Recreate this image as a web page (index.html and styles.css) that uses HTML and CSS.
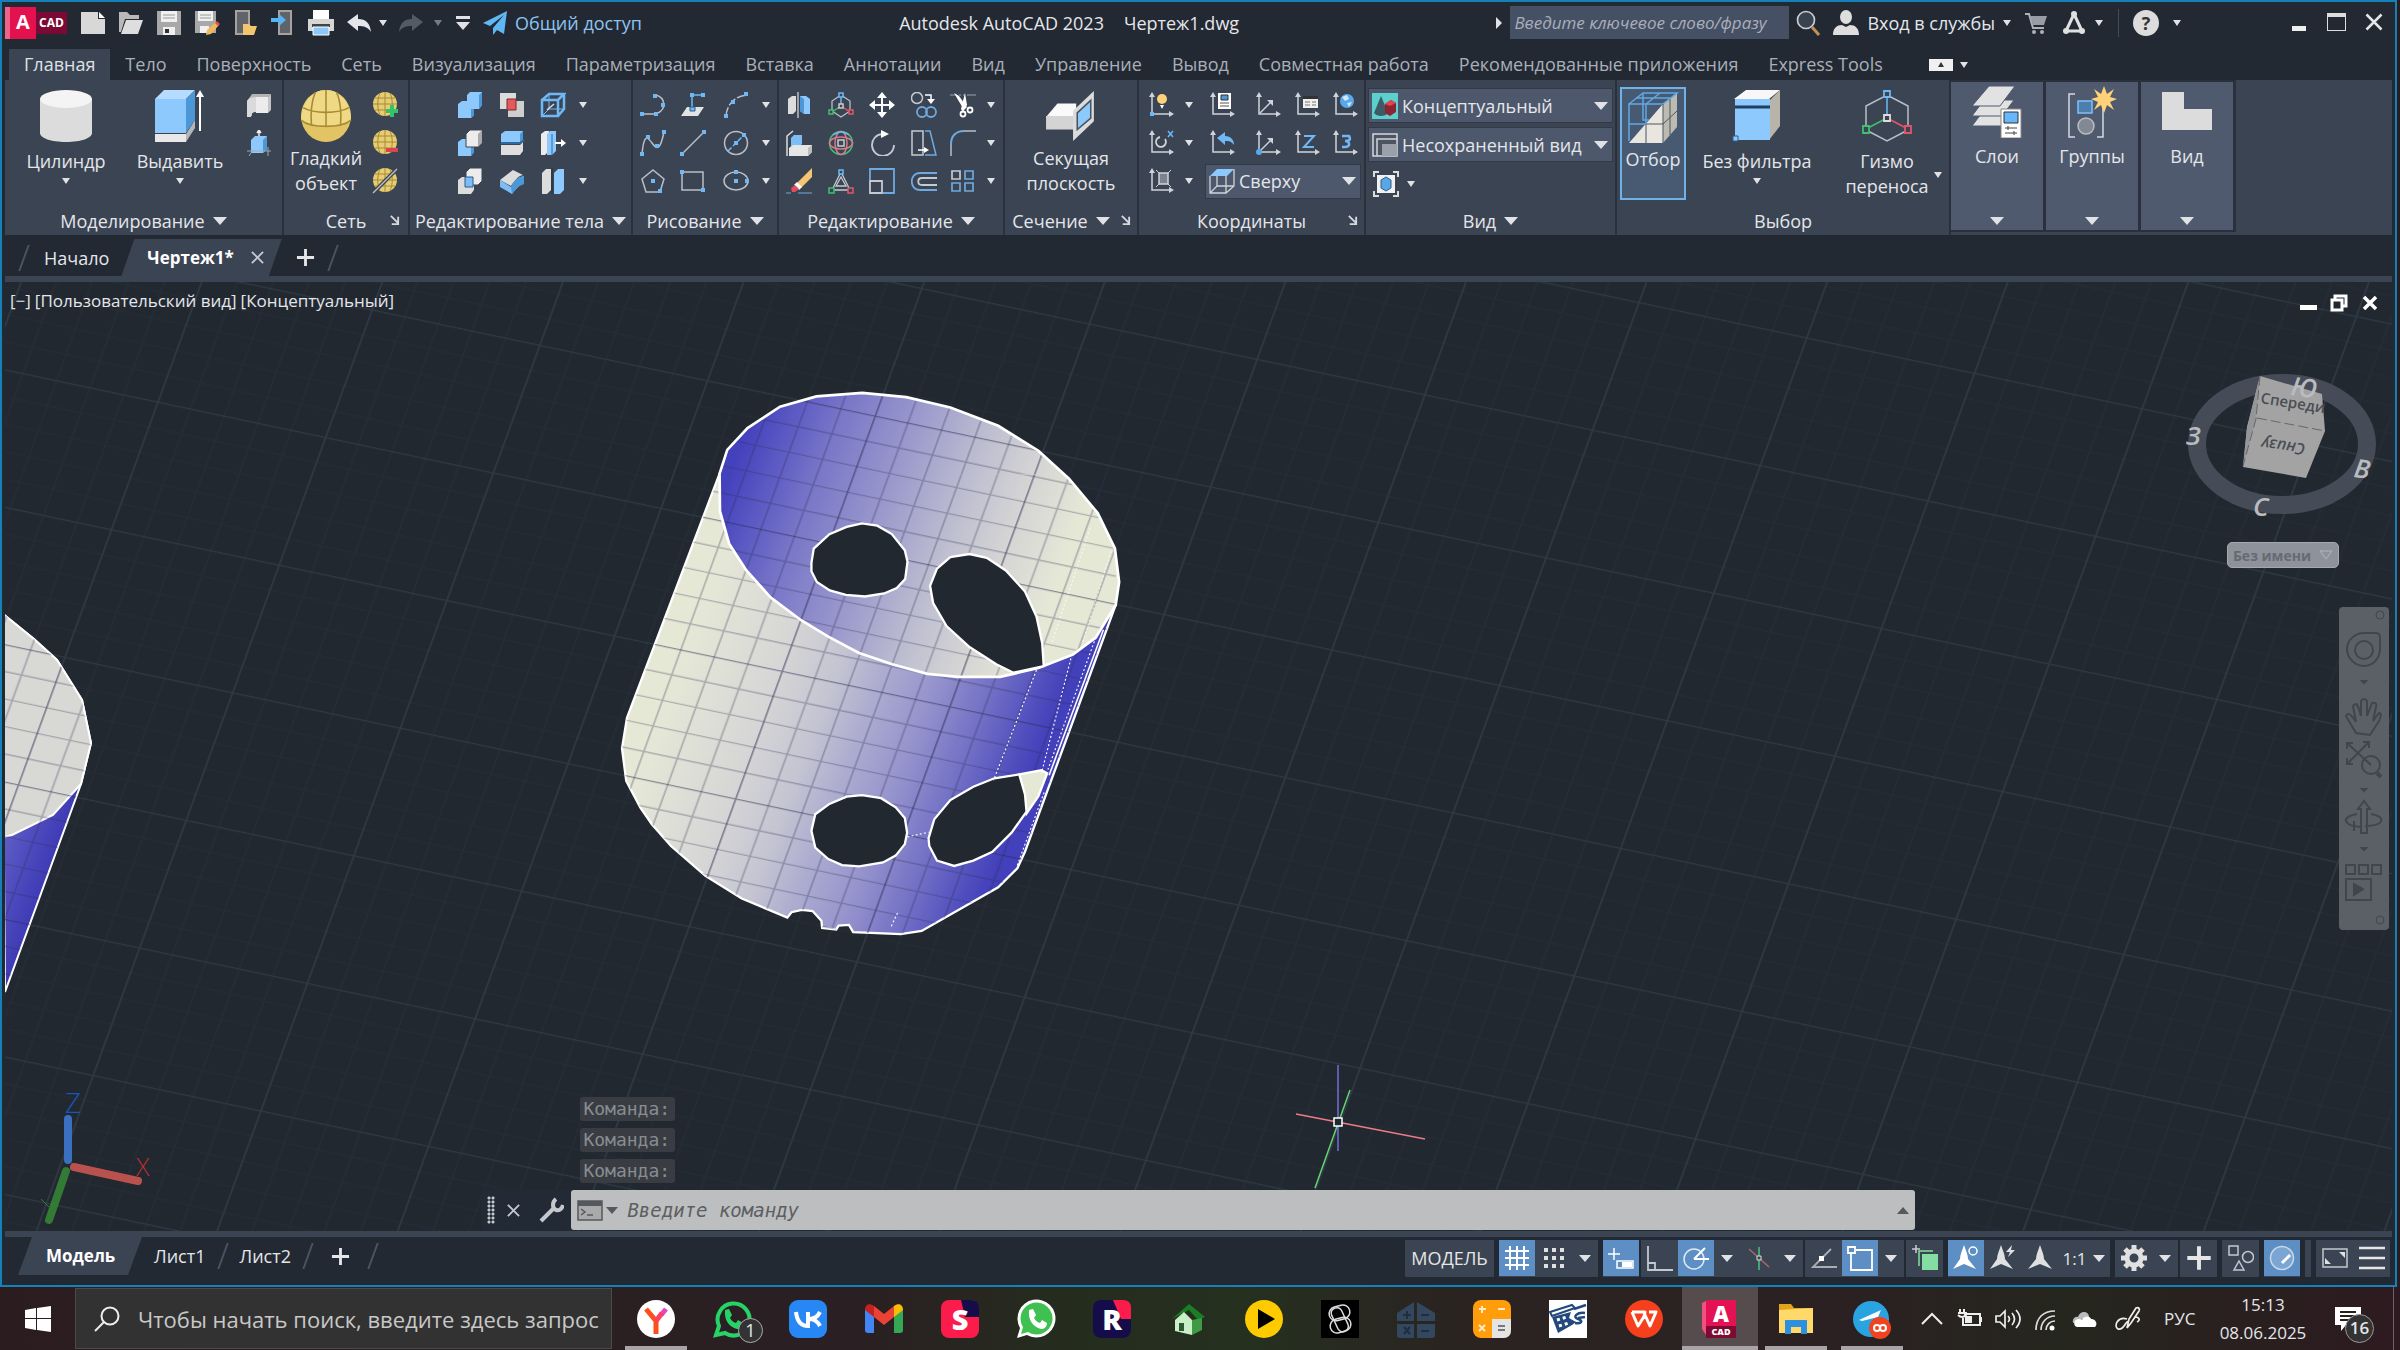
FILE: index.html
```html
<!DOCTYPE html>
<html lang="ru">
<head>
  <meta charset="UTF-8">
  <title>Autodesk AutoCAD 2023 - Чертеж1.dwg</title>
  <link rel="stylesheet" href="styles.css">
</head>
<body>

  <!-- icons -->
  <svg class="sprite" aria-hidden="true">
    <symbol id="new" viewBox="0 0 26 26"><path fill="#d8d8d8" d="M1 2h17v7h7v15H1z"/><path fill="#fff" d="M19 2l6 6h-6z"/></symbol>
    <symbol id="open" viewBox="0 0 26 26"><path fill="#b9b9b9" d="M1 2h8l3 3h9v4H7L3 22H1z"/><path fill="#dedede" d="M8 10h17l-5 14H3z"/></symbol>
    <symbol id="save" viewBox="0 0 26 26"><path fill="#a8a8a8" d="M1 1h24v24H1z"/><path fill="#f0f0f0" d="M5 1h16v11H5zM7 17h12v8H7z"/><path stroke="#999" d="M7 5h12M7 8h12"/><path fill="#333" d="M9 19h4v4H9z"/></symbol>
    <symbol id="saveas" viewBox="0 0 26 26"><path fill="#a8a8a8" d="M1 1h21v22H1z"/><path fill="#f0f0f0" d="M4 1h15v10H4zM6 16h9v7H6z"/><path stroke="#999" d="M6 5h11M6 8h11"/><path fill="#f0b95b" d="M13 20l9-8 3 3-8 9-5 1z"/><path fill="#e04f4f" d="M21 13l2-2 3 3-2 2z"/></symbol>
    <symbol id="phone-open" viewBox="0 0 26 26"><path fill="#5f646c" stroke="#a9a29a" stroke-width="2" d="M4 1h13v23H4z"/><path fill="#f2c66c" d="M11 14h6l2 2h6l-3 9H11z"/></symbol>
    <symbol id="phone-save" viewBox="0 0 26 26"><path fill="#5f646c" stroke="#a9a29a" stroke-width="2" d="M9 1h12v23H9z"/><path fill="#56b4f5" d="M1 8h8V4l7 6-7 6v-4H1z"/></symbol>
    <symbol id="print" viewBox="0 0 26 26"><path fill="#fff" d="M5 0h16v9H5z"/><path fill="#d6d6d6" d="M0 9h26v12H0z"/><path fill="#444" d="M4 14h18v3H4z"/><path fill="#8dc8fb" stroke="#fff" d="M5 17h16v8H5z"/></symbol>
    <symbol id="undo" viewBox="0 0 26 26"><path d="M1 12l11-8v5c8 0 12 4 13 13-3-5-7-6-13-6v5z" fill="currentColor"/></symbol>
    <symbol id="redo" viewBox="0 0 26 26"><path d="M25 12L14 4v5C6 9 2 13 1 22c3-5 7-6 13-6v5z" fill="currentColor"/></symbol>
    <symbol id="plane" viewBox="0 0 26 26"><path fill="#5fb7f3" d="M1 13L25 1l-3 23-7-4-4 5v-7L22 5 8 16z"/></symbol>
    <symbol id="cyl" viewBox="0 0 52 52"><path fill="#dcdcdc" d="M0 9v34c0 5 11 9 26 9s26-4 26-9V9z"/><ellipse cx="26" cy="9" rx="26" ry="9" fill="#f4f4f4"/></symbol>
    <symbol id="extrude" viewBox="0 0 52 52"><path fill="#e8e8e8" d="M1 44h31v8H1z"/><path fill="#b5b5b5" d="M32 44l9-14v8l-9 14z"/><path fill="#8dc9fd" d="M1 9h31v34H1z"/><path fill="#b5dcff" d="M1 9l9-9h31l-9 9z"/><path fill="#4c97d6" d="M32 9l9-9v30l-9 13z"/><path stroke="#fff" stroke-width="2" d="M46 41V4"/><path fill="#fff" d="M42 7l4-7 4 7z"/></symbol>
    <symbol id="egg" viewBox="0 0 50 50"><ellipse cx="25" cy="25" rx="24" ry="25" fill="#e3c464"/><path fill="#f0d984" d="M1 29c0-16 10-29 24-29s24 13 24 29c-8 9-40 9-48 0z"/><path fill="none" stroke="#a88a35" stroke-width="1.5" d="M1 29c9 8 39 8 48 0M3 17c10 6 34 6 44 0M25 0v35M15 2c-4 8-5 22-4 31M35 2c4 8 5 22 4 31"/></symbol>
    <symbol id="mesh" viewBox="0 0 26 26"><ellipse cx="13" cy="12" rx="12" ry="12" fill="#e6cc72"/><path fill="none" stroke="#a88a35" d="M1 12h24M3 6h20M3 18h20M13 0v24M8 1c-3 7-3 15 0 22M18 1c3 7 3 15 0 22"/></symbol>
    <symbol id="mesh-more" viewBox="0 0 26 26"><use href="#mesh"/><path stroke="#33c46a" stroke-width="4" d="M20 13v12M14 19h12"/></symbol>
    <symbol id="mesh-less" viewBox="0 0 26 26"><use href="#mesh"/><path stroke="#dc4350" stroke-width="4" d="M14 20h12"/></symbol>
    <symbol id="mesh-cut" viewBox="0 0 26 26"><use href="#mesh"/><path stroke="#3b4453" stroke-width="4" d="M1 25L25 1"/><path stroke="#bbb" stroke-width="1.5" d="M1 25L25 1"/></symbol>
    <symbol id="polysolid" viewBox="0 0 26 26"><path fill="#b4b4b4" d="M1 9l5-7h19l-3 3H9l-3 6v13H1z"/><path fill="#ececec" d="M10 5h12v16H10z"/><path fill="#c4c4c4" d="M22 5l3-3v16l-3 3z"/><path fill="#dadada" d="M1 9q2-4 9-4v15q-5 0-5 5H1z"/></symbol>
    <symbol id="presspull" viewBox="0 0 26 26"><path fill="#8dc9fd" d="M5 10l4-4h12v13l-4 4H5z"/><path fill="#4c97d6" d="M17 10l4-4v13l-4 4z"/><path stroke="#eee" stroke-width="1.5" fill="none" d="M13 6V0M11 3l2-3 2 3"/><path stroke="#9ab" fill="none" d="M1 21h24M3 26l4-6M22 26v-9"/></symbol>
    <symbol id="union" viewBox="0 0 26 26"><path fill="#8dc9fd" d="M1 12l4-3h5V3l3-3h12v13l-3 4h-5v6l-3 3H1z"/><path fill="#4c97d6" d="M22 3l3-3v13l-3 4h-5v6l-3 3v-9h8z"/></symbol>
    <symbol id="subtract" viewBox="0 0 26 26"><path fill="#dcdcdc" d="M1 1h16v16H1z"/><path fill="#cfcfcf" d="M9 9h16v16H9z"/><path fill="#e25a5a" stroke="#7c2a2a" d="M8 7h9v11H8z"/></symbol>
    <symbol id="wirebox" viewBox="0 0 26 26"><path fill="none" stroke="#6fb8f5" stroke-width="2.5" d="M2 8h16v16H2zM2 8l7-6h15l-6 6M24 2v15l-6 7"/><path fill="none" stroke="#6fb8f5" d="M9 2v15l-7 7M9 17h15"/><path stroke="#ddd" stroke-width="1.5" d="M7 18l7-6"/></symbol>
    <symbol id="copyface" viewBox="0 0 26 26"><path fill="#8dc9fd" d="M1 12l4-3h12v13l-3 4H1z"/><path fill="#4c97d6" d="M14 13l3-3v12l-3 4z"/><path fill="#ececec" stroke="#3b4453" d="M9 4l4-4h12v13l-4 4H9z"/><path fill="#a9a9a9" d="M21 4l4-4v13l-4 4z"/></symbol>
    <symbol id="slice" viewBox="0 0 26 26"><path fill="#8dc9fd" d="M2 4l4-3h18v9l-3 3H2z"/><path fill="#4c97d6" d="M21 4l3-3v9l-3 3z"/><path fill="#dedede" d="M2 15h19l3-3v9l-3 4H2z"/><path fill="none" stroke="#2e6aa0" stroke-width="2" d="M2 13h19l4-3"/></symbol>
    <symbol id="offsetface" viewBox="0 0 26 26"><path fill="#ececec" d="M1 4l4-3h4v20l-4 4H1z"/><path fill="#8dc9fd" d="M7 4l3-3h6v20l-4 4H7z"/><path stroke="#2e6aa0" d="M12 4v21"/><path stroke="#fff" stroke-width="2" d="M15 13h8"/><path fill="#fff" d="M21 9l5 4-5 4z"/></symbol>
    <symbol id="intersect" viewBox="0 0 26 26"><path fill="#dcdcdc" d="M1 12l4-3h12v13l-3 4H1z"/><path fill="#ececec" stroke="#3b4453" d="M9 4l4-4h12v13l-4 4H9z"/><path fill="#7cbdf5" stroke="#2d5c86" d="M8 9h8v10H8z"/></symbol>
    <symbol id="bend" viewBox="0 0 26 26"><path fill="#dcdcdc" d="M1 12L14 2l10 5c-5 1-8 5-12 11z"/><path fill="#7cbdf5" d="M1 12l11 7c4-7 7-10 13-11v8c-5 1-8 5-12 10L1 19z"/><path fill="#4c97d6" d="M12 19c4-7 7-10 13-11v8c-5 1-8 5-12 10z"/></symbol>
    <symbol id="separate" viewBox="0 0 26 26"><path fill="#dcdcdc" d="M2 5l4-4h5v21l-4 4H2z"/><path fill="#8dc9fd" d="M14 5l4-4h6v21l-4 4h-6z"/><path stroke="#2e3642" stroke-width="1.5" d="M12 0v26"/></symbol>
    <symbol id="pline" viewBox="0 0 26 26"><path fill="none" stroke="#b9bfc8" stroke-width="1.5" d="M3 22h13M16 3c10 3 10 14 2 18"/><path fill="#6fb8f5" d="M0 20h4v4H0zM14 20h4v4h-4zM13 2h4v4h-4zM21 11h4v4h-4z"/></symbol>
    <symbol id="ucsrect" viewBox="0 0 26 26"><path fill="#e3e3e3" d="M7 15h17l-6 9H1z"/><path stroke="#6fb8f5" stroke-width="1.5" fill="none" d="M12 18V3h11"/><path fill="#6fb8f5" stroke="#2c5f8e" d="M10 15h5v4h-5z"/><path fill="#6fb8f5" d="M10 1h4v4h-4zM21 1h4v4h-4z"/></symbol>
    <symbol id="arc" viewBox="0 0 26 26"><path fill="none" stroke="#b9bfc8" stroke-width="1.5" stroke-dasharray="9 2" d="M3 24C4 12 12 4 24 3"/><path fill="#6fb8f5" d="M1 22h4v4H1zM8 8h4v4H8zM21 0h4v4h-4z"/></symbol>
    <symbol id="spline" viewBox="0 0 26 26"><path fill="none" stroke="#b9bfc8" stroke-width="1.5" d="M2 24C4 4 7 6 12 13s8 8 12-11"/><path fill="#6fb8f5" d="M0 22h4v4H0zM6 5h4v4H6zM15 14h4v4h-4zM22 0h4v4h-4z"/></symbol>
    <symbol id="line" viewBox="0 0 26 26"><path stroke="#b9bfc8" stroke-width="1.5" d="M2 24L24 2"/><path fill="#6fb8f5" d="M0 22h4v4H0zM22 0h4v4h-4z"/></symbol>
    <symbol id="circle" viewBox="0 0 26 26"><circle cx="13" cy="13" r="11.5" fill="none" stroke="#b9bfc8" stroke-width="1.5"/><path stroke="#6fb8f5" stroke-width="1.5" stroke-dasharray="5 2" d="M5 21L21 5"/><path fill="#6fb8f5" d="M11 11h4v4h-4zM19 3h4v4h-4z"/></symbol>
    <symbol id="polygon" viewBox="0 0 26 26"><path fill="none" stroke="#b9bfc8" stroke-width="1.5" d="M13 2l11 9-4 13H6L2 11z"/><path fill="#6fb8f5" d="M11 11h4v4h-4zM18 21h4v4h-4z"/></symbol>
    <symbol id="rect" viewBox="0 0 26 26"><path fill="none" stroke="#b9bfc8" stroke-width="1.5" d="M2 4h21v18H2z"/><path fill="#6fb8f5" d="M0 2h4v4H0zM21 20h4v4h-4z"/></symbol>
    <symbol id="ellipse" viewBox="0 0 26 26"><ellipse cx="13" cy="13" rx="12" ry="9" fill="none" stroke="#b9bfc8" stroke-width="1.5"/><path fill="#6fb8f5" d="M11 2h4v4h-4zM11 11h4v4h-4zM22 11h4v4h-4z"/></symbol>
    <symbol id="mirror3" viewBox="0 0 26 26"><path fill="#dcdcdc" d="M2 7l4-3h4v15l-3 3H2z"/><path fill="#8dc9fd" d="M14 4h6l4 3v15h-6l-4-3z"/><path fill="#4c97d6" d="M14 4l4 3v15l-4-3z"/><path stroke="#fff" d="M12 0v26"/></symbol>
    <symbol id="gizmo" viewBox="0 0 26 26"><path fill="none" stroke="#b9bfc8" stroke-width="1.3" d="M13 3l9 6v10l-9 6-9-6V9z"/><path stroke="#6fb8f5" stroke-width="1.5" d="M13 3v11"/><path stroke="#3fbf72" stroke-width="1.5" d="M13 14l-9 6"/><path stroke="#e4556b" stroke-width="1.5" d="M13 14l9 6"/><g fill="#3b4453" stroke-width="1.5"><path stroke="#6fb8f5" d="M11 1h4v4h-4z"/><path stroke="#ccc" d="M11 12h4v4h-4z"/><path stroke="#3fbf72" d="M1 18h4v4H1z"/><path stroke="#e4556b" d="M21 18h4v4h-4z"/></g></symbol>
    <symbol id="move" viewBox="0 0 26 26"><path stroke="#fff" stroke-width="2" d="M13 3v20M3 13h20"/><path fill="#fff" d="M13 0l5 6H8zM13 26l5-6H8zM0 13l6-5v10zM26 13l-6-5v10z"/></symbol>
    <symbol id="copy" viewBox="0 0 26 26"><circle cx="6" cy="6" r="5.5" fill="none" stroke="#c5cad2" stroke-width="1.5"/><g fill="none" stroke="#6fa9df" stroke-width="1.8"><circle cx="11" cy="20" r="5"/><circle cx="20" cy="20" r="5"/></g><path fill="none" stroke="#fff" stroke-width="1.5" d="M14 3h6v5"/><path fill="#fff" d="M16 7h8l-4 5z"/></symbol>
    <symbol id="trim" viewBox="0 0 26 26"><path stroke="#9aa2ae" d="M0 3h5M17 3h9"/><path stroke="#6fa9df" stroke-dasharray="2 2" d="M5 3h12"/><path fill="#fff" d="M4 1l5 3 8 11-3 3zM15 1l2 12-4 7-2-3z"/><g fill="none" stroke="#fff" stroke-width="1.8"><circle cx="13" cy="22" r="2.5"/><circle cx="20" cy="18" r="2.5"/></g></symbol>
    <symbol id="align3" viewBox="0 0 26 26"><path fill="#7cbdf5" d="M5 8l3-3h8v9l-3 3H5z"/><path fill="#e6e6e6" d="M3 18l4-3h19v7l-4 4H3z"/><path fill="#bdbdbd" d="M22 18l4-3v7l-4 4z"/><path fill="none" stroke="#ddd" stroke-width="1.5" d="M1 26V6l6-5"/></symbol>
    <symbol id="rotgizmo" viewBox="0 0 26 26"><g fill="none" stroke-width="1.5"><circle cx="13" cy="13" r="11.5" stroke="#3fbf72"/><ellipse cx="13" cy="13" rx="6" ry="11.5" stroke="#d47c8c"/><ellipse cx="13" cy="13" rx="11.5" ry="6" stroke="#d47c8c"/><path stroke="#6fb8f5" d="M5 5q8-6 16 0"/><path stroke="#ccc" d="M10 10h6v6h-6z"/></g></symbol>
    <symbol id="rotate" viewBox="0 0 26 26"><path fill="none" stroke="#c5cad2" stroke-width="1.8" d="M13 4A11 11 0 1 0 25 15"/><path fill="#fff" d="M12 0l8 4-8 4z"/></symbol>
    <symbol id="stretch" viewBox="0 0 26 26"><path fill="none" stroke="#c5cad2" stroke-width="1.5" d="M1 1h11v24H1z"/><path fill="none" stroke="#6fa9df" stroke-width="1.5" d="M14 1h5l6 24H14"/><path stroke="#fff" stroke-width="1.5" d="M7 20h8"/><path fill="#fff" d="M13 17l5 3-5 3z"/></symbol>
    <symbol id="fillet" viewBox="0 0 26 26"><path fill="none" stroke="#b9bfc8" stroke-width="1.5" d="M1 26V14M14 1h12"/><path fill="none" stroke="#6fa9df" stroke-width="2" d="M1 14C1 6 6 1 14 1"/></symbol>
    <symbol id="erase" viewBox="0 0 26 26"><path fill="#f6c572" d="M11 15L26 0v9L15 20z"/><path fill="#fff" d="M8 17l3-3 5 5-3 3z"/><path fill="#e04f5b" d="M5 20l4-3 4 4-4 3H6z"/><path stroke="#6fa9df" d="M0 25h5M12 25h14"/></symbol>
    <symbol id="scalegizmo" viewBox="0 0 26 26"><path fill="none" stroke="#c5cad2" stroke-width="1.3" d="M13 4l9 18H4zM13 9l5 9H8z"/><g fill="#3b4453" stroke-width="1.5"><path stroke="#6fb8f5" d="M11 2h4v4h-4z"/><path stroke="#3fbf72" d="M1 20h5v5H1z"/><path stroke="#e4556b" d="M20 20h5v5h-5z"/></g></symbol>
    <symbol id="scale" viewBox="0 0 26 26"><path fill="none" stroke="#6fa9df" stroke-width="1.8" d="M1 12V1h24v24H14"/><path fill="none" stroke="#c5cad2" stroke-width="1.8" d="M1 13h12v12H1z"/></symbol>
    <symbol id="offset" viewBox="0 0 26 26"><path fill="none" stroke="#6fa9df" stroke-width="1.8" d="M26 5H9C-2 5-2 22 9 22h17"/><path fill="none" stroke="#c5cad2" stroke-width="1.8" d="M26 10H11c-5 0-5 7 0 7h15"/></symbol>
    <symbol id="array" viewBox="0 0 26 26"><g fill="none" stroke-width="1.7"><path stroke="#c5cad2" d="M2 3h8v8H2z"/><path stroke="#6fa9df" d="M15 3h8v8h-8zM2 15h8v8H2zM15 15h8v8h-8z"/></g></symbol>
    <symbol id="section" viewBox="0 0 50 50"><path fill="#fafafa" d="M1 26l11-13h18v13z"/><path fill="#d4d4d4" d="M1 25h27v13H1z"/><path fill="#dcdcdc" d="M27 20L47 1v29L27 49z"/><path fill="#8dc9fd" stroke="#4b555f" stroke-width="1.5" d="M31 22l13-12v17L31 38z"/></symbol>
    <symbol id="ucs" viewBox="0 0 26 26"><path fill="none" stroke="#d0d4da" stroke-width="1.5" d="M4 3v19h19"/><path fill="#d0d4da" d="M1 5l3-5 3 5zM21 19l5 3-5 3z"/></symbol>
    <symbol id="ucs-bulb" viewBox="0 0 26 26"><use href="#ucs"/><circle cx="14" cy="7" r="5" fill="#ffd27a"/><path fill="#fff" d="M12 13h4l-2 4z"/><path fill="#6fb8f5" d="M2 20h4v4H2z"/></symbol>
    <symbol id="ucs-dlg" viewBox="0 0 26 26"><use href="#ucs"/><path fill="#fff" d="M9 1h13v16H9z"/><path fill="#4c97d6" stroke="#333" d="M12 3h7v5h-7z"/><path stroke="#555" d="M11 11h9M11 14h9"/></symbol>
    <symbol id="ucs-3p" viewBox="0 0 26 26"><use href="#ucs"/><path stroke="#d0d4da" stroke-width="1.5" d="M5 21L16 10"/><path fill="#d0d4da" d="M12 8h6v6z"/></symbol>
    <symbol id="ucs-list" viewBox="0 0 26 26"><use href="#ucs"/><path fill="#f0f0f0" d="M9 4h15v12H9z"/><path fill="#333" d="M9 4h15v3H9z"/><path stroke="#777" d="M11 10h5M11 13h5M18 10h4M18 13h4"/></symbol>
    <symbol id="ucs-world" viewBox="0 0 26 26"><use href="#ucs"/><circle cx="15" cy="9" r="7" fill="#58a8ea"/><path fill="#cfe8ff" d="M10 5l5-2 2 4-4 2zM15 11l5-1-3 5z"/></symbol>
    <symbol id="ucs-x" viewBox="0 0 26 26"><use href="#ucs"/><path fill="none" stroke="#d0d4da" stroke-width="1.8" d="M17 9a5 5 0 1 1-5-2"/><path stroke="#6fb8f5" stroke-width="1.5" d="M20 1l5 6M25 1l-5 6"/></symbol>
    <symbol id="ucs-prev" viewBox="0 0 26 26"><use href="#ucs"/><path fill="#6fb8f5" d="M8 8l8-6v4c6 0 9 4 9 9-3-4-5-4-9-4v4z"/></symbol>
    <symbol id="ucs-org" viewBox="0 0 26 26"><use href="#ucs-3p"/><circle cx="4" cy="22" r="3" fill="#58a8ea"/></symbol>
    <symbol id="ucs-z" viewBox="0 0 26 26"><use href="#ucs"/><path fill="none" stroke="#6fb8f5" stroke-width="2" d="M10 6h10L10 17h10"/></symbol>
    <symbol id="ucs-three" viewBox="0 0 26 26"><use href="#ucs"/><path fill="none" stroke="#6fb8f5" stroke-width="2.5" d="M10 6h7c3 5-2 5-4 5 5 0 6 6 0 6h-3"/></symbol>
    <symbol id="ucs-obj" viewBox="0 0 26 26"><use href="#ucs"/><path fill="#7d848f" stroke="#d0d4da" stroke-width="1.5" d="M11 5h9v11h-9z"/><path stroke="#d0d4da" d="M8 2l3 3M23 2l-3 3M8 19l3-3M23 19l-3-3"/></symbol>
    <symbol id="topcube" viewBox="0 0 26 26"><path fill="#8dc9fd" d="M1 8l7-7h17l-7 7z"/><path fill="none" stroke="#cfd3d8" stroke-width="1.3" d="M1 8v17h16l8-7V1M17 8v17M8 8v10h17M8 18l-7 7"/></symbol>
    <symbol id="concept" viewBox="0 0 26 26"><path fill="#5cd0cc" d="M0 0h26v26H0z"/><path fill="#3d5a66" d="M9 3l7 17c-3 4-11 4-14 0z"/><path fill="#8c2433" d="M13 11l6-4 5 3v9l-6 4-5-3z"/><path fill="#e0444f" d="M13 11l6-4 5 3-6 3z"/></symbol>
    <symbol id="view" viewBox="0 0 26 26"><path fill="#4b5563" stroke="#d8d8d8" stroke-width="1.5" d="M1 2h24v22H1z"/><path fill="none" stroke="#d8d8d8" stroke-width="1.5" d="M5 24V7h20"/><path fill="#9aa1ab" d="M10 12h15v12H10z"/></symbol>
    <symbol id="vport" viewBox="0 0 26 26"><path fill="#f0f0f0" d="M4 4h18v18H4z"/><path fill="none" stroke="#ddd" stroke-width="2" d="M1 6V1h5M20 1h5v5M25 20v5h-5M6 25H1v-5"/><path fill="#5aa6e4" stroke="#2c5f8e" d="M8 9l5-3 5 3v8l-5 3-5-3z"/></symbol>
    <symbol id="pick" viewBox="0 0 50 52"><path fill="#e8e6df" d="M1 51L35 12v39z"/><path fill="#bdbab2" d="M35 51V12L49 1v34z"/><path fill="none" stroke="#5fa9e6" stroke-width="1.5" d="M1 49V12h34L49 1H15L1 12M18 12v20M1 32h17M18 12L32 1M8 6h34M15 1v27h6"/><path fill="none" stroke="#4d5661" d="M18 51V32h17l14-13M35 51V12M42 43V7"/></symbol>
    <symbol id="nofilter" viewBox="0 0 50 52"><path fill="#f7f7f7" d="M2 9l12-9h34l-11 9z"/><path fill="#b9b4aa" d="M37 11l11-11v36L37 50z"/><path fill="#8dc9fd" d="M3 9h35v41H3z"/><path stroke="#1f3f63" stroke-width="3" d="M3 17h35"/><path fill="#8dc9fd" stroke="#2c5f8e" d="M1 46h5v5H1z"/></symbol>
    <symbol id="gizmo-big" viewBox="0 0 50 52"><path fill="none" stroke="#b9bfc8" stroke-width="1.5" d="M25 5l21 11v24L25 51 4 40V16z"/><path stroke="#6fb8f5" stroke-width="1.5" d="M25 4v24"/><path stroke="#3fbf72" stroke-width="1.5" d="M25 28L4 39"/><path stroke="#e4556b" stroke-width="1.5" d="M25 28l21 11"/><g fill="#3b4453" stroke-width="1.8"><path stroke="#6fb8f5" d="M22 1h6v6h-6z"/><path stroke="#ddd" d="M22 25h6v6h-6z"/><path stroke="#3fbf72" d="M1 36h6v7H1z"/><path stroke="#e4556b" d="M43 36h6v7h-6z"/></g></symbol>
    <symbol id="layers" viewBox="0 0 50 52"><g fill="#e2e2e2" stroke="#4f5a6d"><path d="M0 40l9-12h33L30 40z"/><path d="M0 30l12-16h30L30 30z"/><path d="M0 20L17 0h26L28 20z"/></g><path fill="#fff" stroke="#888" d="M29 23h20v29H29z"/><path fill="#69b7fb" stroke="#333" d="M32 26h14v11H32z"/><path stroke="#444" d="M33 42h12M33 47h12M36 40v4M42 45v4"/></symbol>
    <symbol id="groups" viewBox="0 0 50 52"><path fill="none" stroke="#d5d9df" stroke-width="1.5" d="M8 8H2v43h6M30 51h6V8"/><path fill="#4d7fae" stroke="#7fc0fb" stroke-width="1.5" d="M11 15h14v12H11z"/><circle cx="19" cy="40" r="8" fill="#828994" stroke="#bbb" stroke-width="1.5"/><path fill="#ffd27a" d="M37 0l3 8 7-5-4 8 7 2-7 3 4 8-7-5-3 8-3-8-7 5 4-8-7-3 7-2-4-8 7 5z"/></symbol>
    <symbol id="lshape" viewBox="0 0 50 52"><path fill="#dcdcdc" d="M0 6h22v17h28v21H0z"/></symbol>
    <symbol id="launch" viewBox="0 0 12 12"><path fill="none" stroke="#d5d9df" stroke-width="2" d="M2 2l8 8M10 3v8H3"/></symbol>
    <symbol id="x" viewBox="0 0 16 16"><path stroke="currentColor" stroke-width="2" d="M2 2l12 12M14 2L2 14"/></symbol>
    <symbol id="plus" viewBox="0 0 20 20"><path stroke="currentColor" stroke-width="3" d="M10 1v18M1 10h18"/></symbol>
    <symbol id="lens" viewBox="0 0 26 26"><circle cx="11" cy="10" r="8.5" fill="#39424f" stroke="#c9cdd3" stroke-width="1.7"/><path stroke="#c2905a" stroke-width="3" d="M17 17l7 8"/></symbol>
    <symbol id="user" viewBox="0 0 26 26"><ellipse cx="13" cy="7" rx="6" ry="7" fill="#dedede"/><path fill="#dedede" d="M0 25c0-7 4-10 9-10l4 2 4-2c5 0 9 3 9 10z"/></symbol>
    <symbol id="cart" viewBox="0 0 24 24"><path fill="none" stroke="#aeb2b8" stroke-width="2" d="M1 3h4l4 14h11"/><path fill="#989da5" d="M6 5h17l-3 9H9z"/><circle cx="10" cy="21" r="2" fill="#aeb2b8"/><circle cx="18" cy="21" r="2" fill="#aeb2b8"/></symbol>
    <symbol id="adsk" viewBox="0 0 24 24"><path fill="none" stroke="#e0e0e0" stroke-width="3" stroke-linejoin="round" d="M12 3l8 17H4z"/><circle cx="12" cy="3" r="3" fill="#e0e0e0"/><circle cx="4" cy="20" r="3" fill="#e0e0e0"/><circle cx="20" cy="20" r="3" fill="#e0e0e0"/></symbol>
    <symbol id="s-grid" viewBox="0 0 26 26"><path stroke="#fff" stroke-width="2" d="M1 6h24M1 13h24M1 20h24M6 1v24M13 1v24M20 1v24"/></symbol>
    <symbol id="s-dots" viewBox="0 0 26 26"><path stroke="#e0e0e0" stroke-width="4" stroke-dasharray="4 4" d="M3 5h20M3 13h20M3 21h20"/></symbol>
    <symbol id="s-dyn" viewBox="0 0 26 26"><path stroke="#fff" stroke-width="1.5" d="M6 3v12M0 9h12"/><path fill="none" stroke="#fff" stroke-width="1.5" d="M9 16h16v7H9z"/><path fill="#fff" d="M14 17h10v5H14z"/></symbol>
    <symbol id="s-ortho" viewBox="0 0 26 26"><path fill="none" stroke="#c4c8ce" stroke-width="1.8" d="M1 1v24h25M1 18h7v7"/></symbol>
    <symbol id="s-polar" viewBox="0 0 26 26"><circle cx="11" cy="14" r="10" fill="none" stroke="#dfe9f5" stroke-width="1.5"/><path stroke="#fff" stroke-width="2" d="M11 14h15M11 14L22 3"/></symbol>
    <symbol id="s-iso" viewBox="0 0 26 26"><path stroke="#a86a6a" stroke-width="1.5" d="M3 4l20 18"/><path stroke="#4fc27c" stroke-width="1.5" d="M13 2v23"/><path fill="#3b4453" stroke="#ddd" d="M11 11h4v4h-4z"/></symbol>
    <symbol id="s-angle" viewBox="0 0 26 26"><path fill="none" stroke="#a9aeb6" stroke-width="1.8" d="M20 4L2 22h24"/><path fill="#fff" d="M8 11h5v5H8z"/></symbol>
    <symbol id="s-snap" viewBox="0 0 26 26"><path fill="none" stroke="#fff" stroke-width="1.8" d="M9 5h16v20H4V9"/><path fill="none" stroke="#fff" stroke-width="1.8" d="M1 2h7v6H1z"/></symbol>
    <symbol id="s-cycle" viewBox="0 0 26 26"><path fill="#84dea1" d="M10 9h16v16H10z"/><path fill="none" stroke="#84dea1" stroke-width="1.5" d="M7 21V6h14"/><path stroke="#ccc" stroke-width="1.5" d="M4 0v8M0 4h8"/></symbol>
    <symbol id="s-anno" viewBox="0 0 26 26"><path fill="#e0e0e0" d="M13 0c2 6 4 10 4 14l8 10-12-5-12 5 8-10c0-4 2-8 4-14z"/></symbol>
    <symbol id="s-gear" viewBox="0 0 26 26"><circle cx="13" cy="13" r="7" fill="none" stroke="#e0e0e0" stroke-width="5"/><path stroke="#e0e0e0" stroke-width="5" d="M13 0v5M13 21v5M0 13h5M21 13h5M4 4l3 3M19 19l3 3M22 4l-3 3M4 22l3-3"/></symbol>
    <symbol id="s-shapes" viewBox="0 0 26 26"><g fill="none" stroke="#c4c8ce" stroke-width="1.5"><path d="M1 1h9v9H1z"/><circle cx="20" cy="12" r="5.5"/><path d="M11 16l5 9H6z"/></g></symbol>
    <symbol id="s-perf" viewBox="0 0 26 26"><circle cx="13" cy="13" r="11.5" fill="#7ba5d2" stroke="#c9d6e6" stroke-width="1.5"/><path stroke="#fff" stroke-width="3" d="M13 18l8-8"/></symbol>
    <symbol id="s-full" viewBox="0 0 26 26"><path fill="none" stroke="#c4c8ce" stroke-width="1.5" d="M1 4h24v18H1z"/><path fill="#e0e0e0" d="M17 7h6v6zM3 19v-6l6 6z"/></symbol>
    <symbol id="s-menu" viewBox="0 0 26 26"><path stroke="#e6e6e6" stroke-width="2.5" d="M0 3h26M0 13h26M0 23h26"/></symbol>
  </svg>

  <div class="app">
    <header class="titlebar">
      <button class="logo" aria-label="Меню приложения"><b>A</b><span>CAD</span></button>
      <div class="quick">
        <button aria-label="Создать"><svg class="ico"><use href="#new"/></svg></button>
        <button aria-label="Открыть"><svg class="ico"><use href="#open"/></svg></button>
        <button aria-label="Сохранить"><svg class="ico"><use href="#save"/></svg></button>
        <button aria-label="Сохранить как"><svg class="ico"><use href="#saveas"/></svg></button>
        <button aria-label="Открыть из Web"><svg class="ico"><use href="#phone-open"/></svg></button>
        <button aria-label="Сохранить в Web"><svg class="ico"><use href="#phone-save"/></svg></button>
        <button aria-label="Печать"><svg class="ico"><use href="#print"/></svg></button>
        <button aria-label="Отменить"><svg class="ico"><use href="#undo"/></svg></button>
      </div>
      <i class="caret"></i>
      <button class="redo" aria-label="Повторить"><svg class="ico"><use href="#redo"/></svg></button>
      <i class="caret dim"></i>
      <button class="more" aria-label="Настройка"><i class="caret mid"></i></button>
      <a class="share" href="#"><svg class="ico"><use href="#plane"/></svg>Общий доступ</a>
      <h1 class="title"><span>Autodesk AutoCAD 2023</span><span>Чертеж1.dwg</span></h1>
      <i class="caret-right"></i>
      <input class="search" type="text" aria-label="Поиск" placeholder="Введите ключевое слово/фразу">
      <button class="find" aria-label="Найти"><svg class="ico"><use href="#lens"/></svg></button>
      <button class="login"><svg class="ico"><use href="#user"/></svg>Вход в службы<i class="caret"></i></button>
      <button class="cart" aria-label="Магазин"><svg class="ico-s"><use href="#cart"/></svg></button>
      <button class="adsk" aria-label="Autodesk"><svg class="ico-s"><use href="#adsk"/></svg><i class="caret"></i></button>
      <button class="help" aria-label="Справка"><span>?</span><i class="caret"></i></button>
      <div class="winbtns">
        <button class="w-min" aria-label="Свернуть"></button>
        <button class="w-max" aria-label="Развернуть"></button>
        <button aria-label="Закрыть"><svg class="ico-x"><use href="#x"/></svg></button>
      </div>
    </header>

    <nav class="tabs">
      <a class="active" href="#">Главная</a>
      <a href="#">Тело</a>
      <a href="#">Поверхность</a>
      <a href="#">Сеть</a>
      <a href="#">Визуализация</a>
      <a href="#">Параметризация</a>
      <a href="#">Вставка</a>
      <a href="#">Аннотации</a>
      <a href="#">Вид</a>
      <a href="#">Управление</a>
      <a href="#">Вывод</a>
      <a href="#">Совместная работа</a>
      <a href="#">Рекомендованные приложения</a>
      <a href="#">Express Tools</a>
      <button class="collapse" aria-label="Свернуть ленту"><i></i></button><i class="caret"></i>
    </nav>

    <div class="ribbon">
      <section class="panel p-model">
        <div class="body">
          <button class="big"><svg class="ico-b"><use href="#cyl"/></svg><span>Цилиндр</span><i class="caret"></i></button>
          <button class="big"><svg class="ico-b"><use href="#extrude"/></svg><span>Выдавить</span><i class="caret"></i></button>
          <div class="tools c1">
            <button aria-label="Политело"><svg class="ico"><use href="#polysolid"/></svg></button>
            <button aria-label="Вытягивание"><svg class="ico"><use href="#presspull"/></svg></button>
          </div>
        </div>
        <h2>Моделирование <i class="caret mid"></i></h2>
      </section>

      <section class="panel p-mesh">
        <div class="body">
          <button class="big two"><svg class="ico-b"><use href="#egg"/></svg><span>Гладкий<br>объект</span></button>
          <div class="tools c1">
            <button aria-label="Сгладить"><svg class="ico"><use href="#mesh-more"/></svg></button>
            <button aria-label="Уменьшить сглаживание"><svg class="ico"><use href="#mesh-less"/></svg></button>
            <button aria-label="Уточнить сеть"><svg class="ico"><use href="#mesh-cut"/></svg></button>
          </div>
        </div>
        <h2>Сеть</h2><svg class="launch"><use href="#launch"/></svg>
      </section>

      <section class="panel p-edit3">
        <div class="body">
          <div class="tools c4">
            <button aria-label="Объединение"><svg class="ico"><use href="#union"/></svg></button>
            <button aria-label="Вычитание"><svg class="ico"><use href="#subtract"/></svg></button>
            <button aria-label="Ребра"><svg class="ico"><use href="#wirebox"/></svg></button>
            <i class="caret"></i>
            <button aria-label="Взаимодействие"><svg class="ico"><use href="#copyface"/></svg></button>
            <button aria-label="Сечение"><svg class="ico"><use href="#slice"/></svg></button>
            <button aria-label="Смещение граней"><svg class="ico"><use href="#offsetface"/></svg></button>
            <i class="caret"></i>
            <button aria-label="Пересечение"><svg class="ico"><use href="#intersect"/></svg></button>
            <button aria-label="Толщина"><svg class="ico"><use href="#bend"/></svg></button>
            <button aria-label="Разделить"><svg class="ico"><use href="#separate"/></svg></button>
            <i class="caret"></i>
          </div>
        </div>
        <h2>Редактирование тела <i class="caret mid"></i></h2>
      </section>

      <section class="panel p-draw">
        <div class="body">
          <div class="tools c4">
            <button aria-label="Полилиния"><svg class="ico"><use href="#pline"/></svg></button>
            <button aria-label="3D полилиния"><svg class="ico"><use href="#ucsrect"/></svg></button>
            <button aria-label="Дуга"><svg class="ico"><use href="#arc"/></svg></button>
            <i class="caret"></i>
            <button aria-label="Сплайн"><svg class="ico"><use href="#spline"/></svg></button>
            <button aria-label="Отрезок"><svg class="ico"><use href="#line"/></svg></button>
            <button aria-label="Круг"><svg class="ico"><use href="#circle"/></svg></button>
            <i class="caret"></i>
            <button aria-label="Многоугольник"><svg class="ico"><use href="#polygon"/></svg></button>
            <button aria-label="Прямоугольник"><svg class="ico"><use href="#rect"/></svg></button>
            <button aria-label="Эллипс"><svg class="ico"><use href="#ellipse"/></svg></button>
            <i class="caret"></i>
          </div>
        </div>
        <h2>Рисование <i class="caret mid"></i></h2>
      </section>

      <section class="panel p-modify">
        <div class="body">
          <div class="tools c6">
            <button aria-label="3D зеркало"><svg class="ico"><use href="#mirror3"/></svg></button>
            <button aria-label="3D перенос"><svg class="ico"><use href="#gizmo"/></svg></button>
            <button aria-label="Перенести"><svg class="ico"><use href="#move"/></svg></button>
            <button aria-label="Копировать"><svg class="ico"><use href="#copy"/></svg></button>
            <button aria-label="Обрезать"><svg class="ico"><use href="#trim"/></svg></button>
            <i class="caret"></i>
            <button aria-label="3D выравнивание"><svg class="ico"><use href="#align3"/></svg></button>
            <button aria-label="3D поворот"><svg class="ico"><use href="#rotgizmo"/></svg></button>
            <button aria-label="Повернуть"><svg class="ico"><use href="#rotate"/></svg></button>
            <button aria-label="Растянуть"><svg class="ico"><use href="#stretch"/></svg></button>
            <button aria-label="Сопряжение"><svg class="ico"><use href="#fillet"/></svg></button>
            <i class="caret"></i>
            <button aria-label="Стереть"><svg class="ico"><use href="#erase"/></svg></button>
            <button aria-label="3D масштаб"><svg class="ico"><use href="#scalegizmo"/></svg></button>
            <button aria-label="Масштаб"><svg class="ico"><use href="#scale"/></svg></button>
            <button aria-label="Подобие"><svg class="ico"><use href="#offset"/></svg></button>
            <button aria-label="Массив"><svg class="ico"><use href="#array"/></svg></button>
            <i class="caret"></i>
          </div>
        </div>
        <h2>Редактирование <i class="caret mid"></i></h2>
      </section>

      <section class="panel p-section">
        <div class="body">
          <button class="big two"><svg class="ico-b"><use href="#section"/></svg><span>Секущая<br>плоскость</span></button>
        </div>
        <h2>Сечение <i class="caret mid"></i></h2><svg class="launch"><use href="#launch"/></svg>
      </section>

      <section class="panel p-coord">
        <div class="body">
          <div class="tools cu">
            <button aria-label="Знак ПСК"><svg class="ico"><use href="#ucs-bulb"/></svg></button>
            <i class="caret"></i>
            <button aria-label="Диспетчер ПСК"><svg class="ico"><use href="#ucs-dlg"/></svg></button>
            <button aria-label="ПСК"><svg class="ico"><use href="#ucs-3p"/></svg></button>
            <button aria-label="Именованные ПСК"><svg class="ico"><use href="#ucs-list"/></svg></button>
            <button aria-label="МСК"><svg class="ico"><use href="#ucs-world"/></svg></button>
            <button aria-label="Поворот X"><svg class="ico"><use href="#ucs-x"/></svg></button>
            <i class="caret"></i>
            <button aria-label="Предыдущая ПСК"><svg class="ico"><use href="#ucs-prev"/></svg></button>
            <button aria-label="Начало"><svg class="ico"><use href="#ucs-org"/></svg></button>
            <button aria-label="Ось Z"><svg class="ico"><use href="#ucs-z"/></svg></button>
            <button aria-label="3 точки"><svg class="ico"><use href="#ucs-three"/></svg></button>
            <button aria-label="Объект"><svg class="ico"><use href="#ucs-obj"/></svg></button>
            <i class="caret"></i>
            <label class="combo span4"><svg class="ico"><use href="#topcube"/></svg><select aria-label="ПСК"><option>Сверху</option></select><i class="caret mid"></i></label>
          </div>
        </div>
        <h2>Координаты</h2><svg class="launch"><use href="#launch"/></svg>
      </section>

      <section class="panel p-view">
        <div class="body col">
          <label class="combo"><svg class="ico"><use href="#concept"/></svg><select aria-label="Визуальный стиль"><option>Концептуальный</option></select><i class="caret mid"></i></label>
          <label class="combo"><svg class="ico"><use href="#view"/></svg><select aria-label="Вид"><option>Несохраненный вид</option></select><i class="caret mid"></i></label>
          <button class="vport" aria-label="Видовые экраны"><svg class="ico"><use href="#vport"/></svg><i class="caret"></i></button>
        </div>
        <h2>Вид <i class="caret mid"></i></h2>
      </section>

      <section class="panel p-select">
        <div class="body">
          <button class="big on"><svg class="ico-b"><use href="#pick"/></svg><span>Отбор</span></button>
          <button class="big"><svg class="ico-b"><use href="#nofilter"/></svg><span>Без фильтра</span><i class="caret"></i></button>
          <button class="big giz"><svg class="ico-b"><use href="#gizmo-big"/></svg><span>Гизмо<br>переноса</span></button>
          <i class="caret"></i>
        </div>
        <h2>Выбор</h2>
      </section>

      <button class="folded"><svg class="ico-b"><use href="#layers"/></svg><span>Слои</span><i class="caret mid"></i></button>
      <button class="folded"><svg class="ico-b"><use href="#groups"/></svg><span>Группы</span><i class="caret mid"></i></button>
      <button class="folded"><svg class="ico-b"><use href="#lshape"/></svg><span>Вид</span><i class="caret mid"></i></button>
    </div>

    <nav class="files">
      <i class="slash"></i>
      <a href="#">Начало</a>
      <a class="active" href="#">Чертеж1*<svg class="close"><use href="#x"/></svg></a>
      <button aria-label="Новый чертеж"><svg class="plus"><use href="#plus"/></svg></button>
      <i class="slash"></i>
    </nav>

    <main class="viewport">
      <svg class="scene" viewBox="5 282 2387 949" preserveAspectRatio="xMinYMin slice">
        <defs>
          <pattern id="grid" width="100" height="100" patternUnits="userSpaceOnUse" patternTransform="matrix(1.677 .354 -.465 1.276 232 692)">
            <path stroke="#252c35" stroke-width="1" d="M20 0v100M40 0v100M60 0v100M80 0v100M0 20h100M0 40h100M0 60h100M0 80h100"/>
            <path stroke="#303944" stroke-width="2" d="M0 0v100M0 0h100"/>
          </pattern>
          <pattern id="gridOn" width="100" height="100" patternUnits="userSpaceOnUse" patternTransform="matrix(1.677 .354 -.465 1.276 232 692)">
            <path stroke="#2a2a50" stroke-opacity=".3" stroke-width="1" d="M20 0v100M40 0v100M60 0v100M80 0v100M0 20h100M0 40h100M0 60h100M0 80h100"/>
            <path stroke="#2a2a50" stroke-opacity=".5" stroke-width="2" d="M0 0v100M0 0h100"/>
          </pattern>
          <linearGradient id="inner" gradientUnits="userSpaceOnUse" x1="467" y1="177" x2="1459" y2="554">
            <stop offset="0.02" stop-color="#4441bd"/><stop offset="0.12" stop-color="#5d5bc3"/><stop offset="0.23" stop-color="#7a78c8"/><stop offset="0.40" stop-color="#9a98cc"/><stop offset="0.57" stop-color="#bcbcd0"/><stop offset="0.70" stop-color="#d2d2d4"/><stop offset="0.87" stop-color="#e6e8d6"/>
          </linearGradient>
          <linearGradient id="outer" gradientUnits="userSpaceOnUse" x1="467" y1="177" x2="1459" y2="554">
            <stop offset="0.06" stop-color="#e6e8d6"/><stop offset="0.30" stop-color="#d6d6d6"/><stop offset="0.44" stop-color="#c4c4d2"/><stop offset="0.54" stop-color="#aeadd0"/><stop offset="0.68" stop-color="#9492cc"/><stop offset="0.81" stop-color="#7270c5"/><stop offset="0.93" stop-color="#4f4dbd"/><stop offset="0.98" stop-color="#4340bb"/>
          </linearGradient>
          <linearGradient id="side" gradientUnits="userSpaceOnUse" x1="10" y1="820" x2="65" y2="840">
            <stop offset="0" stop-color="#5f5dc6"/><stop offset="1" stop-color="#3b38b4"/>
          </linearGradient>
          <path id="wall" d="M417 297L175 935l-13 80 11 85 37 70 30 43 50 57 90 78 95 59 119 50 11-14 27-6 28 3 23 25 2 19 37 4 6-10 27-2 11 19 124 5 55-8 200-114 50-50 20-43 237-645V300z"/>
          <path id="rim" d="M417 297l20-62 53-57 85-56 95-27 120-9 115 11 115 27 125 48 105 65 80 73 75 90 45 92 11 88-9 60-52 85-60 45-90 35-100 23H1040l-80-8-92-25-88-30-80-43-70-42-80-60-63-70-45-70-24-85z"/>
          <path id="holes" d="M657 530l6-37 41-38 45-19 40-9 40 6 38 22 34 42 7 30-6 45-22 24-33 14-50 8-50-4-42-12-34-22-14-28zM657 1230l10-43 37-27 45-19 40-4 50 8 38 24 24 28 6 38-6 30-24 30-33 18-62 10-45-3-36-16-34-30zM967 590l18-45 35-30 50-8 45 10 50 33 50 55 30 65 15 70 4 60-79 17-45-22-70-45-60-55-35-60zM963 1250l15-50 42-50 60-35 55-22 65-10 15 52 4 45-39 55-50 50-50 23-50 14-45-14-20-38z"/>
        </defs>

        <rect x="5" y="282" width="2387" height="949" fill="#212830"/>
        <rect x="5" y="282" width="2387" height="949" fill="url(#grid)"/>

        <clipPath id="solidClip"><use href="#wall" transform="translate(560 360) scale(.3827)"/></clipPath>
        <clipPath id="rimClip"><use href="#rim" transform="translate(560 360) scale(.3827)"/></clipPath>
        <g transform="translate(560 360) scale(.3827)">
          <path fill="url(#outer)" stroke="#fff" stroke-width="6" d="M417 297L175 935l-13 80 11 85 37 70 30 43 50 57 90 78 95 59 119 50 11-14 27-6 28 3 23 25 2 19 37 4 6-10 27-2 11 19 124 5 55-8 200-114 50-50 20-43L1452 640z"/>
          <use href="#rim" fill="url(#inner)"/>
        </g>
        <g clip-path="url(#solidClip)"><rect x="600" y="474" width="520" height="480" fill="url(#gridOn)"/></g>
        <g clip-path="url(#rimClip)"><rect x="700" y="380" width="440" height="94" fill="url(#gridOn)"/></g>
        <g transform="translate(560 360) scale(.3827)">
          <use href="#rim" fill="none" stroke="#fff" stroke-width="7"/>
          <path fill="#e6e8d6" stroke="#fff" stroke-width="6" d="M1200 1083l58-11 15 8-23 60-31 45z"/>
          <use href="#holes" fill="#212830" stroke="#fff" stroke-width="6"/>
          <g fill="none" stroke="#fff" stroke-width="3" stroke-dasharray="5 6">
            <path d="M1245 810L1133 1098M1335 780l-77 300M908 1246l55-12M882 1445l-18 38M1400 725l-125 345M1265 1130l-70 190"/>
          </g>
          <path fill="none" stroke="#fff" stroke-opacity=".7" stroke-width="3" stroke-dasharray="5 6" d="M1385 440l-100 300M1440 500l-75 240"/>
          <path fill="none" stroke="#fff" stroke-width="4" d="M1420 705l-142 380"/>
        </g>

        <!-- solid cut by the left edge -->
        <clipPath id="leftClip"><path d="M5 615l29 24 23 21 25 40 9 43-10 41L5 992z"/></clipPath>
        <path fill="url(#side)" stroke="#fff" stroke-width="2" d="M2 613l32 26 23 21 25 40 9 43-10 41L5 992z"/>
        <path fill="#d8d8d5" stroke="#fff" stroke-width="2" d="M2 613l32 26 23 21 25 40 9 43-10 41-28 31-41 20-10 2z"/>
        <g clip-path="url(#leftClip)"><rect x="5" y="600" width="90" height="400" fill="url(#gridOn)"/></g>

        <!-- ucs icon -->
        <g fill="none" stroke-width="8" stroke-linecap="round">
          <path stroke="#3b6fc0" d="M68 1119v41"/>
          <path stroke="#b9514f" d="M74 1167l64 14"/>
          <path stroke="#337a35" d="M66 1171l-17 49"/>
        </g>
        <text class="axis z" x="65" y="1113">Z</text>
        <text class="axis x" x="136" y="1176">X</text>
        <path stroke="#337a35" d="M41 1199l8 8"/>

        <!-- crosshair -->
        <g fill="none" stroke-width="1.5">
          <path stroke="#6f6fd8" d="M1338 1065v86"/>
          <path stroke="#ee7b86" d="M1296 1114l129 25"/>
          <path stroke="#63d672" d="M1350 1090l-35 98"/>
          <path fill="#212830" stroke="#fff" d="M1334 1118h8v8h-8z"/>
        </g>

        <!-- view cube -->
        <ellipse cx="2282" cy="444" rx="85" ry="61" fill="none" stroke="#454c57" stroke-width="18"/>
        <path fill="#a3a3a4" d="M2260 376l62 18 3 37-19 47-63-11 4-40z"/>
        <path fill="#959698" d="M2260 376l-13 52-4 39 13-48z"/>
        <path fill="none" stroke="#63676d" stroke-dasharray="10 4" d="M2257 418l68 13M2260 376l-4 43-13 47"/>
        <g class="cube">
          <text transform="translate(2260 403) rotate(9)">Спереди</text>
          <text class="low" transform="translate(2306 444) rotate(188)">Снизу</text>
          <text class="dir" transform="translate(2290 395) rotate(8)">Ю</text>
          <text class="dir" x="2186" y="445">З</text>
          <text class="dir" transform="translate(2353 477) rotate(8)">В</text>
          <text class="dir" x="2253" y="516">С</text>
        </g>
      </svg>

      <div class="vlabels"><button>[−]</button><button>[Пользовательский вид]</button><button>[Концептуальный]</button></div>
      <div class="mdi">
        <button class="m-min" aria-label="Свернуть чертеж"></button>
        <button class="m-max" aria-label="Восстановить чертеж"><svg viewBox="0 0 18 18"><path fill="none" stroke="#fff" stroke-width="3" d="M5 5V2h11v10h-3M2 6h10v10H2z"/></svg></button>
        <button aria-label="Закрыть чертеж"><svg viewBox="0 0 18 18"><path stroke="#fff" stroke-width="3.5" d="M3 3l12 12M15 3L3 15"/></svg></button>
      </div>
      <button class="ucsname">Без имени<svg viewBox="0 0 14 10"><path fill="none" stroke="#b4b7bd" d="M1 1h12L7 9z"/></svg></button>

      <div class="navbar">
        <svg viewBox="0 0 50 322" fill="none" stroke="#41464e" stroke-width="2">
          <circle cx="41" cy="8" r="4" stroke-width="1"/>
          <path d="M25 26h12q4 0 4 5v11c0 9-7 17-16 17S8 51 8 42s8-16 17-16z"/><circle cx="25" cy="43" r="9"/>
          <path d="M23 74h4l-2 2zM23 182h4l-2 2zM23 241h4l-2 2z"/>
          <path d="M17 126L7 109c2-4 5-2 10 6L14 99c3-4 5-2 8 10V94c3-3 5-2 6 0v15l5-13c4-1 5 1 4 4l-3 14 6-8c3 0 2 4 0 8l-9 14z"/>
          <path d="M8 157l22-22M8 136l24 22M8 142v-6h6M24 135h6v6M8 151v6h6"/><circle cx="32" cy="158" r="9"/><path stroke-width="4" d="M38 166l4 4"/>
          <path d="M22 226v-24h-3l6-8 6 8h-3v24zM18 207c-17 3-14 12 5 13M32 207c17 3 12 12-6 12M15 214v10"/>
          <path d="M7 258h9v9H7zM20 258h9v9h-9zM33 258h9v9h-9zM7 272h25v21H7z"/><path fill="#41464e" d="M15 277l9 5-9 6z"/>
          <circle cx="41" cy="313" r="4" stroke-width="1"/>
        </svg>
      </div>

      <div class="cmd">
        <ul>
          <li>Команда:</li>
          <li>Команда:</li>
          <li>Команда:</li>
        </ul>
        <div class="cmdline">
          <i class="grip"></i>
          <button aria-label="Закрыть"><svg class="close"><use href="#x"/></svg></button>
          <button aria-label="Настройка"><svg class="ico" viewBox="0 0 26 26"><path fill="none" stroke="#c4c7cb" stroke-width="4" d="M3 24L17 10"/><path fill="none" stroke="#c4c7cb" stroke-width="4" d="M18 2c-4 3-4 9 0 11 3 1 6-1 7-5"/></svg></button>
          <div class="cmdbox">
            <svg class="ico" viewBox="0 0 26 26"><path fill="#aaa" stroke="#55585c" stroke-width="1.5" d="M1 4h24v19H1z"/><path fill="#55585c" d="M1 4h24v5H1z"/><path fill="none" stroke="#55585c" stroke-width="1.5" d="M4 12l4 3-4 3M10 18h6"/></svg>
            <i class="caret mid"></i>
            <input type="text" aria-label="Командная строка" placeholder="Введите команду">
            <i class="up"></i>
          </div>
        </div>
      </div>
    </main>

    <footer class="bottom">
      <nav class="sheets">
        <a class="active" href="#">Модель</a>
        <a href="#">Лист1</a><i class="slash"></i>
        <a href="#">Лист2</a><i class="slash"></i>
        <button aria-label="Новый лист"><svg class="plus"><use href="#plus"/></svg></button><i class="slash"></i>
      </nav>
      <div class="status">
        <div class="grp"><button class="txt">МОДЕЛЬ</button></div>
        <div class="grp"><button class="on" aria-label="Сетка"><svg class="ico"><use href="#s-grid"/></svg></button><button aria-label="Шаг"><svg class="ico"><use href="#s-dots"/></svg></button><button class="dd" aria-label="Шаг, меню"><i class="caret mid"></i></button></div>
        <div class="grp"><button class="on" aria-label="Динамический ввод"><svg class="ico"><use href="#s-dyn"/></svg></button></div>
        <div class="grp tight"><button aria-label="Орто"><svg class="ico"><use href="#s-ortho"/></svg></button><button class="on" aria-label="Полярное отслеживание"><svg class="ico"><use href="#s-polar"/></svg></button><button class="dd" aria-label="Углы"><i class="caret mid"></i></button><button aria-label="Изометрия"><svg class="ico"><use href="#s-iso"/></svg></button><button class="dd" aria-label="Изометрия, меню"><i class="caret mid"></i></button></div>
        <div class="grp tight"><button aria-label="Отслеживание"><svg class="ico"><use href="#s-angle"/></svg></button><button class="on" aria-label="Привязка"><svg class="ico"><use href="#s-snap"/></svg></button><button class="dd" aria-label="Привязка, меню"><i class="caret mid"></i></button></div>
        <div class="grp tight"><button aria-label="Циклический выбор"><svg class="ico"><use href="#s-cycle"/></svg></button></div>
        <div class="grp"><button class="on" aria-label="Аннотации"><svg class="ico" viewBox="0 0 26 26"><path fill="#fff" d="M11 0c2 6 4 10 4 14l8 10-12-5-11 5 7-10c0-4 2-8 4-14z"/><circle cx="20" cy="6" r="4" fill="none" stroke="#fff" stroke-width="1.5"/></svg></button><button aria-label="Автомасштаб"><svg class="ico" viewBox="0 0 26 26"><path fill="#e0e0e0" d="M11 0c2 6 4 10 4 14l8 10-12-5-11 5 7-10c0-4 2-8 4-14z"/><path fill="#e0e0e0" d="M22 0l-6 7h4l-2 5 7-7h-4z"/></svg></button><button aria-label="Масштаб"><svg class="ico"><use href="#s-anno"/></svg></button><button class="txt ratio">1:1<i class="caret mid"></i></button></div>
        <div class="grp"><button aria-label="Рабочее пространство"><svg class="ico"><use href="#s-gear"/></svg></button><button class="dd" aria-label="Рабочее пространство, меню"><i class="caret mid"></i></button></div>
        <div class="grp tight"><button aria-label="Монитор аннотаций"><svg class="ico"><use href="#plus"/></svg></button></div>
        <div class="grp"><button aria-label="Изоляция"><svg class="ico"><use href="#s-shapes"/></svg></button></div>
        <div class="grp"><button class="on" aria-label="Графика"><svg class="ico"><use href="#s-perf"/></svg></button></div>
        <div class="grp sep"></div>
        <div class="grp"><button aria-label="Полный экран"><svg class="ico"><use href="#s-full"/></svg></button><button aria-label="Адаптация"><svg class="ico"><use href="#s-menu"/></svg></button></div>
      </div>
    </footer>
  </div>

  <div class="taskbar">
    <button class="start" aria-label="Пуск"><svg viewBox="0 0 26 26"><path fill="#fff" d="M0 4l11-2v10H0zM12 2l14-2v12H12zM0 13h11v11L0 22zM12 13h14v13l-14-2z"/></svg></button>
    <label class="wsearch"><svg viewBox="0 0 26 26"><circle cx="16" cy="10" r="8.5" fill="none" stroke="#eee" stroke-width="2"/><path stroke="#eee" stroke-width="2" d="M10 16l-9 9"/></svg><input type="text" aria-label="Поиск в Windows" placeholder="Чтобы начать поиск, введите здесь запрос"></label>
    <div class="apps">
      <button class="run" aria-label="Яндекс"><svg viewBox="0 0 38 38"><circle cx="19" cy="19" r="19" fill="#fff"/><path fill="none" stroke="#fc4f1c" stroke-width="5" d="M9 9l10 12v13"/><path stroke="#e645c1" stroke-width="5" d="M29 9l-5 6"/><path stroke="#fb4060" stroke-width="5" d="M25 13l-6 8"/></svg></button>
      <button aria-label="WhatsApp"><svg viewBox="0 0 38 38"><path fill="none" stroke="#25d366" stroke-width="4" d="M3 35l3-9A16 16 0 1 1 12 33z"/><path fill="#25d366" d="M12 10l4-1 3 6-2 3c2 3 3 4 6 5l2-3 5 3c0 4-3 6-6 6-8-2-13-9-12-19z"/></svg><em class="one">1</em></button>
      <button aria-label="VK"><svg viewBox="0 0 38 38"><rect width="38" height="38" rx="9" fill="#2787f5"/><path fill="none" stroke="#fff" stroke-width="4" d="M7 12c1 9 5 14 12 14V12M31 12c-2 4-6 7-11 7 5 0 9 3 11 7"/></svg></button>
      <button aria-label="Gmail"><svg viewBox="0 0 38 38"><path fill="#4285f4" d="M0 9l9 7v17H3q-3 0-3-3z"/><path fill="#34a853" d="M38 9l-9 7v17h6q3 0 3-3z"/><path fill="#ea4335" d="M9 6l10 8 10-8v11l-10 8-10-8z"/><path fill="#c5221f" d="M0 10C0 4 5 3 9 6v11l-9-7z"/><path fill="#fbbc04" d="M38 10c0-6-5-7-9-4v11z"/></svg></button>
      <button aria-label="S"><svg viewBox="0 0 38 38"><rect width="38" height="38" rx="8" fill="#fb1c4b"/><path fill="#150d4a" d="M20 0h10q8 0 8 8v9H24z"/><text class="mark" x="19" y="30">S</text></svg></button>
      <button aria-label="WhatsApp Desktop"><svg viewBox="0 0 38 38"><path fill="#fff" d="M0 38l3-10A19 19 0 1 1 10 35z"/><path fill="#3fc151" d="M4 34l2-7A16 16 0 1 1 11 32z"/><path fill="#fff" d="M12 10l4-1 3 6-2 3c2 3 3 4 6 5l2-3 5 3c0 4-3 6-6 6-8-2-13-9-12-19z"/></svg></button>
      <button aria-label="R"><svg viewBox="0 0 38 38"><rect width="38" height="38" rx="8" fill="#150d4a"/><path fill="#fb1c4b" d="M20 0h10q8 0 8 8v11H28z"/><text class="mark" x="19" y="30">R</text></svg></button>
      <button aria-label="Дом"><svg viewBox="0 0 38 38"><path fill="#1a7f24" d="M3 19L20 4l16 13-7 3-9-10z"/><path fill="#c9efc6" d="M6 20l9-8 8 8v15L6 31z"/><path fill="#3f9a45" d="M23 20l10-2v12l-10 5z"/><path fill="#2c5a30" d="M10 23h5v8h-5z"/></svg></button>
      <button aria-label="Музыка"><svg viewBox="0 0 38 38"><circle cx="19" cy="19" r="19" fill="#fecb00"/><path d="M13 9l17 10-17 10z"/></svg></button>
      <button aria-label="ChatGPT"><svg viewBox="0 0 38 38"><path d="M0 0h38v38H0z"/><g fill="none" stroke="#ddd" stroke-width="1.5"><rect x="8" y="6" width="21" height="14" rx="7" transform="rotate(-15 18 13)"/><rect x="9" y="18" width="21" height="14" rx="7" transform="rotate(-15 20 25)"/><rect x="13" y="7" width="11" height="25" rx="5" transform="rotate(-25 19 19)"/></g></svg></button>
      <button aria-label="Калькулятор"><svg viewBox="0 0 38 38"><path fill="#33475f" d="M0 13L17 2v19H0zM20 2l18 11v8H20zM0 24h17v14H3q-3 0-3-3zM20 24h18v11q0 3-3 3H20z"/><path stroke="#1f2d3e" stroke-width="2" d="M6 15h8M10 11v8M24 15h8M7 27l6 7M13 27l-6 7M24 31h8"/></svg></button>
      <button aria-label="Калькулятор 2"><svg viewBox="0 0 38 38"><rect width="38" height="38" rx="8" fill="#ff9d0a"/><path fill="#e4e4e4" d="M19 19h19v11q0 8-8 8H19z"/><path stroke="#ffe9c8" stroke-width="2" d="M6 9h7M9 6v7M25 9h7M6 25l6 6M12 25l-6 6"/><path stroke="#777" stroke-width="2" d="M25 26h7M25 30h7"/></svg></button>
      <button aria-label="Сметы"><svg viewBox="0 0 38 38"><path fill="#fff" d="M0 0h38v38H0z"/><path fill="none" stroke="#23497c" stroke-width="2" d="M1 12l22-7 3 3L3 16z"/><path fill="#23497c" d="M3 17l19-5-2 6 7 4-4 3-14 8z"/><path fill="none" stroke="#23497c" stroke-width="2.5" d="M37 5l-12 4M36 13c-8-1-13 4-7 6s3 5-3 4M36 17l-7 1"/><path stroke="#fff" stroke-width="3" stroke-dasharray="3 3" d="M8 20l10-3M10 26l10-3"/></svg></button>
      <button aria-label="WPS"><svg viewBox="0 0 38 38"><circle cx="19" cy="19" r="19" fill="#f6401d"/><path fill="none" stroke="#fff" stroke-width="3" stroke-linejoin="round" d="M7 12h13l-1 4M7 12l6 14 7-11 5 11 6-14h-7"/></svg></button>
      <button class="run cur" aria-label="AutoCAD"><svg viewBox="0 0 38 38"><path fill="#f0527f" d="M1 3l6-3v38l-6-9z"/><path fill="#e41155" d="M5 0h30v26H5z"/><path fill="#7d0a33" d="M5 26h30v12H5z"/><text class="mark a" x="20" y="22">A</text><text class="mark c" x="20" y="35">CAD</text></svg></button>
      <button class="run" aria-label="Проводник"><svg viewBox="0 0 38 38"><path fill="#e0a519" d="M2 4h12l3 4h19v24H2z"/><path fill="#ffd969" d="M2 10l34-2v25H2z"/><path fill="#2f8fdf" d="M8 34V20h22v14h-6v-7H14v7z"/></svg></button>
      <button class="run" aria-label="Telegram"><svg viewBox="0 0 38 38"><circle cx="18" cy="19" r="18" fill="#29a4e0"/><path fill="#fff" d="M6 20l22-10-3 7-16 4z"/><circle cx="27" cy="28" r="11" fill="#f0431f"/><g fill="none" stroke="#fff" stroke-width="2"><circle cx="24" cy="28" r="3"/><circle cx="30" cy="28" r="3"/></g></svg></button>
    </div>
    <div class="tray">
      <svg viewBox="0 0 26 26"><path fill="none" stroke="#eee" stroke-width="2" d="M3 18L13 8l10 10"/></svg>
      <svg viewBox="0 0 26 26"><path fill="none" stroke="#eee" stroke-width="2" d="M7 8h16v11H6v-7M3 3v4M7 3v4M1 7h8v2q-4 4-8 0M24 11v5"/><path fill="#eee" d="M8 10h7v7H8z"/></svg>
      <svg viewBox="0 0 26 26"><path fill="none" stroke="#eee" stroke-width="1.7" d="M1 10h4l5-5v16l-5-5H1zM13 10q3 3 0 6M17 7q5 6 0 12M21 4q8 9 0 18"/></svg>
      <svg viewBox="0 0 26 26"><g fill="none" stroke="#ddd" stroke-width="1.7"><path d="M3 24C3 12 10 5 22 5M8 24c0-8 6-14 14-14M13 24c0-5 4-9 9-9"/></g><circle cx="19" cy="22" r="2.5" fill="#fff"/></svg>
      <svg viewBox="0 0 26 26"><path fill="#bbb" d="M2 17c-1-5 3-7 5-6 2-7 11-6 11 0z"/><path fill="#fff" d="M4 20c-3-5 3-9 7-6 3-6 9-3 9-1 5 0 7 5 4 8H6z"/></svg>
      <svg class="pen" viewBox="0 0 26 26"><path fill="none" stroke="#eee" stroke-width="1.7" d="M12 22l2-9 7-11c3-1 4 1 3 3l-8 12zM12 13C3 10-2 20 3 23c6 2 7-8 11-8M20 11c4 0 6 3 2 5"/></svg>
      <span class="lang">РУС</span>
      <time>15:13<br>08.06.2025</time>
      <button class="note" aria-label="Уведомления"><svg viewBox="0 0 26 26"><path fill="#fff" d="M0 1h26v18H11l-5 6v-6H0z"/><path stroke="#26211f" stroke-width="2" d="M5 6h16M5 10h16M5 14h10"/></svg><em>16</em></button>
    </div>
  </div>

</body>
</html>
```

FILE: styles.css
```css
* { box-sizing: border-box; }

body {
  margin: 0;
  height: 100vh;
  display: flex;
  flex-direction: column;
  overflow: hidden;
  background: #2b1c20;
  color: #e4e6ea;
  font-family: "Open Sans", "Noto Sans", sans-serif;
  font-size: 18px;
}

button {
  padding: 0;
  border: 0;
  background: none;
  color: inherit;
  font: inherit;
  display: flex;
  align-items: center;
  justify-content: center;
}

a { color: inherit; text-decoration: none; }
input, select { font: inherit; color: inherit; border: 0; background: none; outline: none; min-width: 0; }

.sprite { position: absolute; width: 0; height: 0; }
.ico { width: 26px; height: 26px; flex: none; display: block; }
.ico-s { width: 24px; height: 24px; flex: none; }
.ico-b { width: 52px; height: 52px; flex: none; }
.ico-x { width: 20px; height: 20px; }

.caret { flex: none; width: 0; height: 0; border: 4px solid transparent; border-top: 6px solid #e0e2e5; border-bottom: 0; }
.caret.mid { border-width: 8px 7px 0; }
.caret.dim { border-top-color: #777c84; }

.app {
  flex: 1;
  min-height: 0;
  margin-right: 3px;
  border: 2px solid #1482b8;
  background: #222933;
  display: flex;
  flex-direction: column;
  padding: 0 3px;
}

/* title bar */
.titlebar { height: 47px; flex: none; display: flex; align-items: center; padding-bottom: 6px; white-space: nowrap; }
.logo { height: 32px; margin-right: 13px; }
.logo b { width: 31px; height: 32px; background: #e4114f; border-left: 5px solid #f0628a; font-size: 20px; line-height: 30px; color: #fff; }
.logo span { width: 31px; height: 22px; background: #7a0a35; color: #fff; font-size: 12px; font-weight: 700; line-height: 22px; }
.quick { display: flex; gap: 12px; margin-right: 7px; }
.redo { color: #555b64; margin: 0 10px 0 11px; }
.more { border-top: 3px solid #e0e2e5; padding-top: 3px; margin: 0 12px 0 14px; }
.share { display: flex; align-items: center; gap: 7px; color: #8cc4f0; }
.title { flex: 1; margin: 0; display: flex; justify-content: center; gap: 20px; font-size: 18px; font-weight: 400; }
.caret-right { border: 6px solid transparent; border-left: 6px solid #e0e2e5; border-right: 0; margin-right: 8px; }
.search { width: 279px; height: 33px; background: #465064; padding: 0 4px; font-size: 17px; font-style: italic; }
.search::placeholder { color: #a8afba; opacity: 1; }
.find { margin: 0 12px 0 6px; }
.login { gap: 8px; }
.cart { margin: 0 14px 0 13px; }
.adsk { gap: 9px; padding-right: 15px; border-right: 1px solid #454c57; height: 28px; }
.help { gap: 14px; margin-left: 14px; }
.help span { width: 26px; height: 26px; border-radius: 50%; background: #dcdcdc; color: #333; font-weight: 700; line-height: 26px; }
.winbtns { display: flex; align-items: center; gap: 21px; margin: 0 8px 2px 111px; }
.w-min { width: 14px; height: 5px; background: #eee; align-self: flex-end; margin-bottom: 1px; }
.w-max { width: 19px; height: 18px; border: 1px solid #ddd; border-top-width: 4px; }
.w-max + button { margin-left: -3px; }

/* ribbon tabs */
.tabs { height: 31px; flex: none; display: flex; align-items: center; color: #a9afb9; padding-left: 4px; }
.tabs a { padding: 0 15px; height: 31px; line-height: 30px; white-space: nowrap; }
.tabs .active { background: #3b4453; color: #dfe1e6; }
.collapse { width: 24px; height: 12px; background: #f0f0f0; margin: 0 7px 0 31px; }
.collapse i { border: 3px solid transparent; border-bottom: 5px solid #333; border-top: 0; }

/* ribbon */
.ribbon { height: 155px; flex: none; display: flex; background: #3b4453; }
.panel { position: relative; flex: none; border-right: 2px solid #2a313c; display: flex; flex-direction: column; }
.panel h2 { margin: 0; height: 29px; display: flex; justify-content: center; align-items: center; gap: 8px; font-size: 18px; font-weight: 400; white-space: nowrap; }
.body { height: 126px; display: flex; padding-top: 6px; }
.body.col { flex-direction: column; padding: 9px 3px 0; gap: 6px; }
.big { flex-direction: column; justify-content: flex-start; padding-top: 4px; line-height: 25px; text-align: center; white-space: nowrap; }
.big span { margin-top: 7px; }
.big .caret { margin-top: 4px; }
.big.two span { margin-top: 4px; }
.tools { display: grid; grid-auto-rows: 38px; align-items: center; justify-items: center; align-content: start; }
.launch { position: absolute; right: 8px; bottom: 10px; width: 11px; height: 11px; }

.p-model { width: 279px; }
.p-model .big { width: 116px; margin-left: 3px; }
.p-model .big + .big { margin-left: -2px; }
.p-model .tools { width: 42px; }
.p-mesh { width: 126px; }
.p-mesh .big { width: 84px; }
.p-mesh .tools { width: 34px; }
.p-edit3 { width: 223px; }
.p-edit3 .tools { margin-left: 38px; grid-template-columns: 43px 42px 40px 20px; }
.p-draw { width: 146px; }
.p-draw .tools { grid-template-columns: 40px 40px 46px 14px; }
.p-modify { width: 226px; }
.p-modify .tools { grid-template-columns: 40px 44px 38px 46px 32px 24px; }
.p-section { width: 134px; }
.p-section .body { justify-content: center; }
.p-section h2 { padding-right: 20px; }
.p-coord { width: 227px; }
.p-coord .tools { grid-template-columns: 44px 12px 54px 38px 40px 36px; }
.p-coord .launch, .p-section .launch { right: 6px; }
.p-view { width: 251px; }
.p-select { width: 334px; }
.folded { position: relative; flex: none; width: 95px; margin-bottom: 3px; padding: 4px 0 0; border: solid #2a313c; border-width: 2px 3px 2px 0; background: #4f5a6e; flex-direction: column; justify-content: flex-start; }
.folded span { margin-top: 6px; }
.folded .caret { margin: auto 0 5px; }

.combo { height: 33px; display: flex; align-items: center; background: #4d586c; outline: 1px solid #323a47; padding: 0 4px 0 3px; }
.combo select { appearance: none; flex: 1; padding: 0 0 0 4px; }
.combo.span4 { grid-column: span 4; width: 154px; justify-self: start; margin-left: 11px; }
.vport { align-self: flex-start; gap: 8px; margin-left: 4px; height: 33px; }

.p-select .big.on { width: 66px; height: 113px; margin: 1px 0 0 3px; padding-top: 3px; border: 2px solid #6fb2e8; background: #475a72; }
.p-select .big.on span { margin-top: 3px; }
.p-select .big { width: 142px; }
.p-select .big.giz { width: 118px; }
.p-select .body > .caret { margin-top: 86px; margin-left: -12px; }

/* file tabs */
.files { height: 47px; flex: none; display: flex; align-items: center; border-bottom: 6px solid #3b4453; padding: 4px 0 0 14px; }
.files a { display: flex; align-items: center; height: 37px; padding: 0 12px 0 15px; }
.files .active { background: #3b4453; color: #fff; font-weight: 700; font-size: 17px; gap: 16px; padding: 0 17px 0 26px; clip-path: polygon(13px 0, 100% 0, calc(100% - 13px) 100%, 0 100%); }
.files button { margin: 0 13px 0 14px; }
.slash { width: 2px; height: 26px; background: #4c5461; transform: skewX(-20deg); margin: 0 4px; }
.close { width: 15px; height: 15px; color: #c4c8ce; }
.plus { width: 19px; height: 19px; color: #e4e6ea; }

/* drawing area */
.viewport { position: relative; flex: 1; min-height: 0; overflow: hidden; background: #212830; }
.scene { position: absolute; inset: 0; width: 100%; height: 100%; }
.axis { font-size: 28px; font-weight: 300; }
.axis.z { fill: #1c56b4; }
.axis.x { fill: #b52f35; font-size: 25px; }
.cube { font-size: 15px; font-weight: 600; fill: #4a4e54; }
.cube .low { font-style: italic; font-size: 16px; }
.cube .dir { font-size: 26px; fill: #b9bbbf; font-style: italic; }
.vlabels { position: absolute; left: 5px; top: 7px; display: flex; gap: 4px; font-size: 17px; }
.mdi { position: absolute; right: 13px; top: 12px; display: flex; gap: 13px; align-items: center; }
.mdi svg { width: 18px; height: 18px; }
.m-min { width: 17px; height: 5px; background: #fff; align-self: flex-end; margin-bottom: 2px; }
.ucsname { position: absolute; right: 53px; top: 260px; width: 112px; height: 26px; border-radius: 5px; background: #8e929b; border: 1px solid #a5a8af; color: #666a73; font-size: 14px; font-weight: 700; gap: 8px; }
.ucsname svg { width: 14px; height: 10px; }
.navbar { position: absolute; right: 3px; top: 325px; width: 50px; height: 323px; border-radius: 4px; background: #5b5f66; }
.navbar svg { width: 50px; height: 322px; }

.cmd { position: absolute; left: 20%; right: 20%; bottom: 1px; }
.cmd ul { list-style: none; margin: 0 0 7px 98px; padding: 0; display: flex; flex-direction: column; align-items: flex-start; gap: 7px; }
.cmd li { height: 24px; line-height: 24px; padding: 0 5px 0 3px; border-radius: 3px; background: #393d43; color: #888c91; font-family: "DejaVu Sans Mono", "Liberation Mono", monospace; font-size: 18px; }
.cmdline { display: flex; align-items: center; height: 40px; background: #222a35; }
.grip { width: 8px; height: 28px; margin: 0 11px 0 5px; background: radial-gradient(circle, #c4c7cb 1px, transparent 2px) 0 0 / 4px 4px; }
.cmdline > button { margin-right: 17px; }
.cmdline > button + button { margin-right: 7px; }
.cmdbox { flex: 1; height: 40px; display: flex; align-items: center; padding: 0 6px; gap: 3px; border-radius: 3px; background: #bdbec0; }
.cmdbox .caret { border-top-color: #55585c; border-width: 7px 6px 0; }
.cmdbox input { flex: 1; padding: 0 0 0 6px; font-family: "DejaVu Sans Mono", "Liberation Mono", monospace; font-size: 19px; font-style: italic; }
.cmdbox input::placeholder { color: #5c5f63; opacity: 1; }
.up { border: 6px solid transparent; border-bottom: 7px solid #55585c; border-top: 0; }

/* sheets and status bar */
.bottom { height: 54px; flex: none; display: flex; justify-content: space-between; border-top: 6px solid #3b4453; }
.sheets { display: flex; align-items: center; height: 38px; padding-left: 13px; }
.sheets a { padding: 0 12px; }
.sheets .active { width: 124px; height: 38px; line-height: 38px; padding-left: 28px; background: #3b4453; color: #fff; font-weight: 700; font-size: 17px; clip-path: polygon(14px 0, 100% 0, calc(100% - 14px) 100%, 0 100%); }
.sheets button { margin: 0 18px; }
.status { display: flex; align-items: flex-start; padding: 3px 2px 0 0; }
.grp { display: flex; height: 37px; margin-left: 5px; background: #3b4453; }
.grp.tight { margin-left: 2px; }
.grp button { width: 37px; height: 36px; color: #e6e6e6; }
.grp button.on { width: 36px; background: #5d8fc4; }
.grp button.dd { width: 26px; }
.grp button.txt { width: 89px; }
.grp button.ratio { width: 52px; gap: 7px; font-size: 17px; }
.grp .caret.mid { border-width: 7px 6px 0; }
.grp.sep { width: 6px; }

/* windows taskbar */
.taskbar { height: 63px; flex: none; display: flex; align-items: center; background: linear-gradient(90deg, #2b1c20, #2a2022 22%, #2a1f22 36%, #252c1e 44%, #25301f 52%, #2a2421 60%, #2b2022 76%, #25261e 86%, #2d1a20); }
.taskbar svg { flex: none; }
.start { width: 75px; height: 62px; flex: none; }
.start svg { width: 26px; height: 26px; }
.wsearch { width: 537px; height: 61px; flex: none; display: flex; align-items: center; gap: 18px; padding-left: 18px; background: #323232; border: 1px solid #4a4a4a; }
.wsearch svg { width: 26px; height: 26px; }
.wsearch input { flex: 1; padding: 0; font-size: 22px; }
.wsearch input::placeholder { color: #c8c8c8; opacity: 1; }
.apps { display: flex; flex: none; margin-left: 6px; height: 63px; }
.apps button { position: relative; width: 76px; height: 63px; }
.apps svg { width: 38px; height: 38px; overflow: visible; }
.apps .run::after { content: ""; position: absolute; left: 7px; right: 7px; bottom: 0; height: 4px; background: #a8a3a4; }
.apps .cur { background: #564c4e; }
.apps .cur::after { left: 0; right: 0; }
.one { position: absolute; right: 7px; bottom: 7px; width: 25px; height: 25px; border: 1px solid #aaa; border-radius: 50%; background: #333; font-style: normal; font-size: 18px; line-height: 22px; }
.mark { font-size: 29px; font-weight: 800; fill: #fff; text-anchor: middle; }
.mark.a { font-size: 22px; }
.mark.c { font-size: 9px; }
.tray { margin-left: auto; height: 63px; padding-right: 32px; display: flex; align-items: center; border-right: 1px solid #6b6466; margin-right: 6px; font-size: 17px; }
.tray > svg { width: 26px; height: 26px; margin-right: 12px; }
.tray .pen { margin: 0 23px 0 6px; }
.lang { width: 55px; }
.tray time { text-align: center; line-height: 28px; width: 88px; }
.note { position: relative; margin-left: 28px; }
.note svg { width: 26px; height: 26px; }
.note em { position: absolute; left: 10px; top: 8px; width: 29px; height: 29px; border: 1px solid #999; border-radius: 50%; background: #333; font-style: normal; font-size: 17px; font-weight: 600; line-height: 26px; }
```
